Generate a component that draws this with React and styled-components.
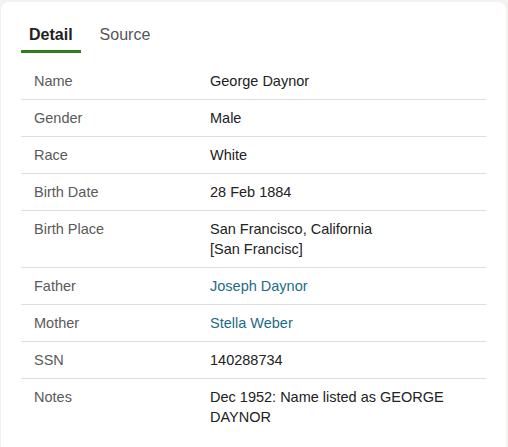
import React from "react";
import styled, { createGlobalStyle } from "styled-components";

const GlobalStyle = createGlobalStyle`
  html, body {
    margin: 0;
    padding: 0;
    background: #f4f2ef;
    font-family: "Liberation Sans", Arial, sans-serif;
  }
`;

const Card = styled.div`
  margin: 2px 2px 0 1px;
  background: #fff;
  border-radius: 8px;
  padding: 23px 20px 30px;
  min-height: 460px;
  box-sizing: border-box;
`;

const Tabs = styled.div`
  display: flex;
  gap: 11px;
`;

const Tab = styled.button`
  background: none;
  border: none;
  border-bottom: 3px solid ${(props) => (props.active ? "#2f7d1d" : "transparent")};
  padding: 0 8px 5px;
  font-family: inherit;
  font-size: 16px;
  line-height: 20px;
  font-weight: ${(props) => (props.active ? 700 : 400)};
  color: ${(props) => (props.active ? "#222" : "#555")};
  cursor: pointer;
`;

const Table = styled.div`
  margin-top: 10px;
`;

const Row = styled.div`
  display: grid;
  grid-template-columns: 176px 1fr;
  padding: 8px 8px 8px 13px;
  border-bottom: 1px solid ${(props) => (props.last ? "transparent" : "#dedede")};
  font-size: 14.5px;
  line-height: 20px;
`;

const Label = styled.span`
  color: #5a5a5a;
`;

const Value = styled.span`
  color: #222;
`;

const Link = styled.a`
  color: #1c6c8a;
  text-decoration: none;
`;

const rows = [
  { label: "Name", value: "George Daynor" },
  { label: "Gender", value: "Male" },
  { label: "Race", value: "White" },
  { label: "Birth Date", value: "28 Feb 1884" },
  {
    label: "Birth Place",
    value: (
      <>
        San Francisco, California
        <br />
        [San Francisc]
      </>
    ),
  },
  { label: "Father", value: <Link href="#">Joseph Daynor</Link> },
  { label: "Mother", value: <Link href="#">Stella Weber</Link> },
  { label: "SSN", value: "140288734" },
  { label: "Notes", value: "Dec 1952: Name listed as GEORGE DAYNOR" },
];

const App = () => {
  return (
    <>
      <GlobalStyle />
      <Card>
        <Tabs>
          <Tab active>Detail</Tab>
          <Tab>Source</Tab>
        </Tabs>
        <Table>
          {rows.map((row, i) => (
            <Row key={row.label} last={i === rows.length - 1}>
              <Label>{row.label}</Label>
              <Value>{row.value}</Value>
            </Row>
          ))}
        </Table>
      </Card>
    </>
  );
};

export default App;
